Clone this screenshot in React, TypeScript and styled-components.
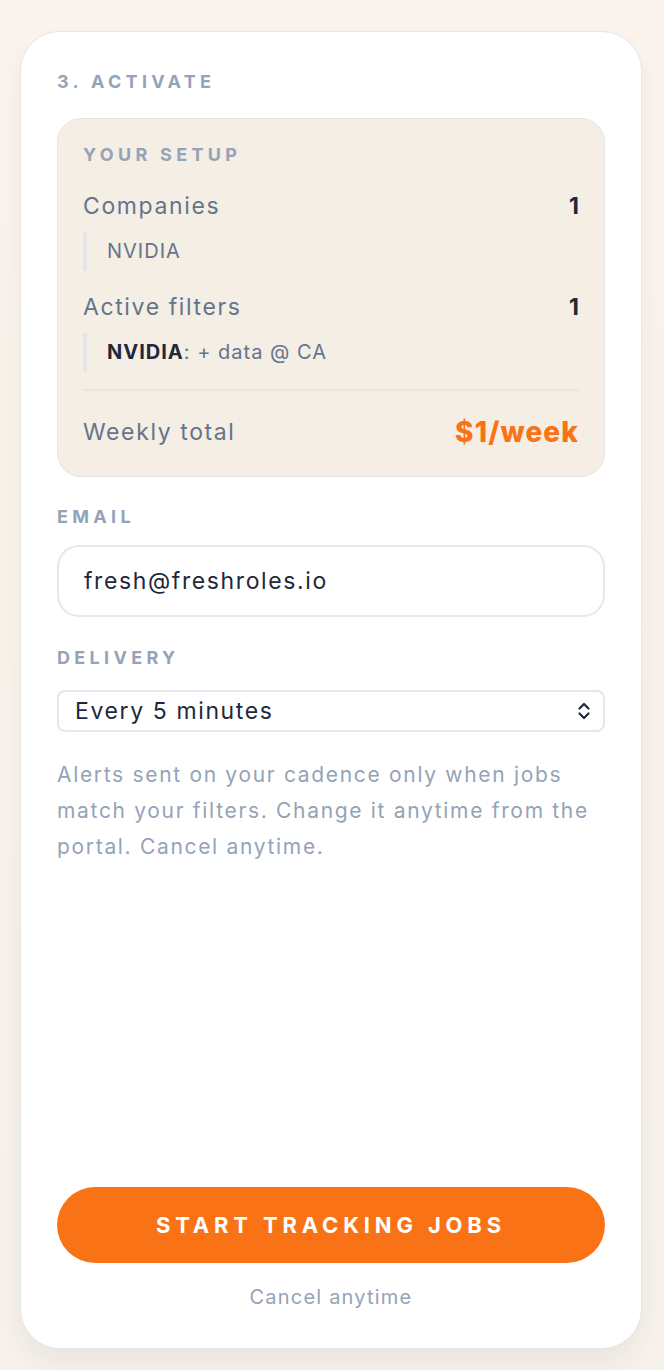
import React from "react";
import styled, { createGlobalStyle } from "styled-components";

const GlobalStyle = createGlobalStyle`
  html, body {
    margin: 0;
    padding: 0;
  }
  body {
    background: linear-gradient(180deg, #fbf3ec 0%, #f6f1eb 100%);
    font-family: Inter, "Liberation Sans", sans-serif;
    -webkit-font-smoothing: antialiased;
  }
`;

const Page = styled.div`
  box-sizing: border-box;
  min-height: 1370px;
  padding: 31px 22px 21px 20px;
`;

const Card = styled.div`
  box-sizing: border-box;
  height: 1318px;
  display: flex;
  flex-direction: column;
  background: #ffffff;
  border: 1px solid #e5e7eb;
  border-radius: 40px;
  padding: 40px 36px 38px;
  box-shadow: 0 14px 24px rgba(60, 50, 40, 0.06);
`;

const Label = styled.div`
  font-size: 18px;
  line-height: 20px;
  font-weight: 700;
  letter-spacing: 0.24em;
  text-transform: uppercase;
  color: #94a3b8;
`;

const Setup = styled.div`
  margin: 26px 0 30px;
  background: #f4eee5;
  border: 1px solid #e6e4e0;
  border-radius: 24px;
  padding: 26px 25px 29px;
`;

const Row = styled.div<{ $top?: number }>`
  display: flex;
  justify-content: space-between;
  align-items: center;
  margin-top: ${(p) => p.$top ?? 0}px;
  font-size: 23px;
  line-height: 30px;
  letter-spacing: 0.07em;
  color: #64748b;
`;

const Count = styled.span`
  font-weight: 700;
  letter-spacing: 0;
  color: #1e293b;
`;

const SubItem = styled.div`
  margin-top: 11px;
  border-left: 4px solid #e2e5ea;
  padding: 6px 0 6px 20px;
  font-size: 20px;
  line-height: 27px;
  letter-spacing: 0.05em;
  color: #64748b;
  b {
    font-weight: 700;
    color: #1e293b;
  }
`;

const Divider = styled.div`
  margin-top: 17px;
  height: 2px;
  background: #e3e5e9;
`;

const Total = styled.span`
  font-size: 28px;
  font-weight: 800;
  letter-spacing: 0.04em;
  color: #f97316;
`;

const Input = styled.div`
  box-sizing: border-box;
  margin: 18px 0 31px;
  height: 72px;
  display: flex;
  align-items: center;
  padding: 0 25px;
  border: 2px solid #e5e7eb;
  border-radius: 22px;
  font-size: 23px;
  letter-spacing: 0.07em;
  color: #1e293b;
`;

const Select = styled.div`
  box-sizing: border-box;
  margin-top: 22px;
  height: 42px;
  display: flex;
  align-items: center;
  justify-content: space-between;
  padding: 0 12px 0 16px;
  border: 2px solid #e5e7eb;
  border-radius: 8px;
  font-size: 23px;
  letter-spacing: 0.07em;
  color: #1e293b;
`;

const Note = styled.p`
  margin: 25px 0 0;
  font-size: 21px;
  line-height: 36px;
  letter-spacing: 0.08em;
  color: #94a3b8;
`;

const Button = styled.button`
  margin-top: auto;
  height: 76px;
  border: none;
  border-radius: 38px;
  background: #f97316;
  color: #ffffff;
  font-family: inherit;
  font-size: 22px;
  font-weight: 700;
  letter-spacing: 0.22em;
`;

const Hint = styled.div`
  margin-top: 21px;
  text-align: center;
  font-size: 20px;
  line-height: 26px;
  letter-spacing: 0.06em;
  color: #94a3b8;
`;

const UpDown = () => (
  <svg width="14" height="20" viewBox="0 0 14 20" fill="none" stroke="#1e293b" strokeWidth="2.2" strokeLinecap="round" strokeLinejoin="round">
    <path d="M2.5 7.5 L7 3 L11.5 7.5" />
    <path d="M2.5 12.5 L7 17 L11.5 12.5" />
  </svg>
);

export default function App() {
  return (
    <Page>
      <GlobalStyle />
      <Card>
        <Label>3. Activate</Label>
        <Setup>
          <Label>Your setup</Label>
          <Row $top={26}>
            <span>Companies</span>
            <Count>1</Count>
          </Row>
          <SubItem>NVIDIA</SubItem>
          <Row $top={21}>
            <span>Active filters</span>
            <Count>1</Count>
          </Row>
          <SubItem>
            <b>NVIDIA</b>: + data @ CA
          </SubItem>
          <Divider />
          <Row $top={26}>
            <span>Weekly total</span>
            <Total>$1/week</Total>
          </Row>
        </Setup>
        <Label>Email</Label>
        <Input>fresh@freshroles.io</Input>
        <Label>Delivery</Label>
        <Select>
          <span>Every 5 minutes</span>
          <UpDown />
        </Select>
        <Note>
          Alerts sent on your cadence only when jobs match your filters. Change it anytime from the portal. Cancel anytime.
        </Note>
        <Button>START TRACKING JOBS</Button>
        <Hint>Cancel anytime</Hint>
      </Card>
    </Page>
  );
}
